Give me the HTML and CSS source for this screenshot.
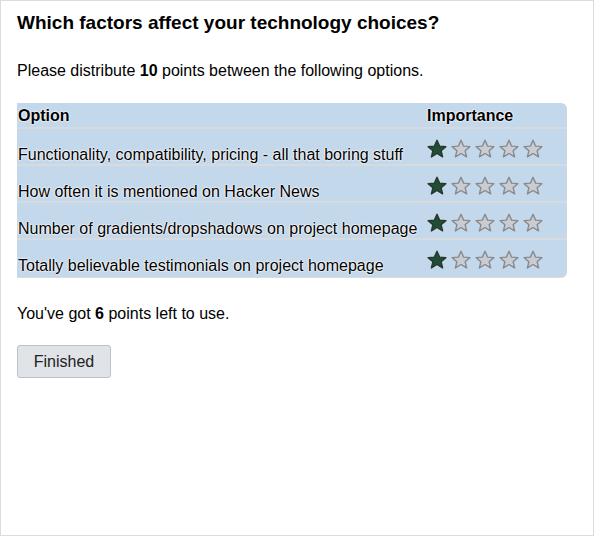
FILE: index.html
```html
<!DOCTYPE html>
<html>
<head>
<meta charset="utf-8">
<link rel="stylesheet" href="styles.css">
</head>
<body>
<div class="page">
  <h1 class="title">Which factors affect your technology choices?</h1>
  <p class="intro">Please distribute <b>10</b> points between the following options.</p>
  <div class="table">
    <div class="row head">
      <div class="cell opt">Option</div>
      <div class="cell imp">Importance</div>
    </div>
    <div class="row">
      <div class="cell opt">Functionality, compatibility, pricing - all that boring stuff</div>
      <div class="cell stars"><svg class="star on" viewBox="0 0 20 20"><path d="M10 1.3L12.6 7.1L18.9 7.6L14.1 11.7L15.6 17.9L10 14.5L4.4 17.9L5.9 11.7L1.1 7.6L7.4 7.1Z"/></svg><svg class="star" viewBox="0 0 20 20"><path d="M10 1.3L12.6 7.1L18.9 7.6L14.1 11.7L15.6 17.9L10 14.5L4.4 17.9L5.9 11.7L1.1 7.6L7.4 7.1Z"/></svg><svg class="star" viewBox="0 0 20 20"><path d="M10 1.3L12.6 7.1L18.9 7.6L14.1 11.7L15.6 17.9L10 14.5L4.4 17.9L5.9 11.7L1.1 7.6L7.4 7.1Z"/></svg><svg class="star" viewBox="0 0 20 20"><path d="M10 1.3L12.6 7.1L18.9 7.6L14.1 11.7L15.6 17.9L10 14.5L4.4 17.9L5.9 11.7L1.1 7.6L7.4 7.1Z"/></svg><svg class="star" viewBox="0 0 20 20"><path d="M10 1.3L12.6 7.1L18.9 7.6L14.1 11.7L15.6 17.9L10 14.5L4.4 17.9L5.9 11.7L1.1 7.6L7.4 7.1Z"/></svg></div>
    </div>
    <div class="row">
      <div class="cell opt">How often it is mentioned on Hacker News</div>
      <div class="cell stars"><svg class="star on" viewBox="0 0 20 20"><path d="M10 1.3L12.6 7.1L18.9 7.6L14.1 11.7L15.6 17.9L10 14.5L4.4 17.9L5.9 11.7L1.1 7.6L7.4 7.1Z"/></svg><svg class="star" viewBox="0 0 20 20"><path d="M10 1.3L12.6 7.1L18.9 7.6L14.1 11.7L15.6 17.9L10 14.5L4.4 17.9L5.9 11.7L1.1 7.6L7.4 7.1Z"/></svg><svg class="star" viewBox="0 0 20 20"><path d="M10 1.3L12.6 7.1L18.9 7.6L14.1 11.7L15.6 17.9L10 14.5L4.4 17.9L5.9 11.7L1.1 7.6L7.4 7.1Z"/></svg><svg class="star" viewBox="0 0 20 20"><path d="M10 1.3L12.6 7.1L18.9 7.6L14.1 11.7L15.6 17.9L10 14.5L4.4 17.9L5.9 11.7L1.1 7.6L7.4 7.1Z"/></svg><svg class="star" viewBox="0 0 20 20"><path d="M10 1.3L12.6 7.1L18.9 7.6L14.1 11.7L15.6 17.9L10 14.5L4.4 17.9L5.9 11.7L1.1 7.6L7.4 7.1Z"/></svg></div>
    </div>
    <div class="row">
      <div class="cell opt">Number of gradients/dropshadows on project homepage</div>
      <div class="cell stars"><svg class="star on" viewBox="0 0 20 20"><path d="M10 1.3L12.6 7.1L18.9 7.6L14.1 11.7L15.6 17.9L10 14.5L4.4 17.9L5.9 11.7L1.1 7.6L7.4 7.1Z"/></svg><svg class="star" viewBox="0 0 20 20"><path d="M10 1.3L12.6 7.1L18.9 7.6L14.1 11.7L15.6 17.9L10 14.5L4.4 17.9L5.9 11.7L1.1 7.6L7.4 7.1Z"/></svg><svg class="star" viewBox="0 0 20 20"><path d="M10 1.3L12.6 7.1L18.9 7.6L14.1 11.7L15.6 17.9L10 14.5L4.4 17.9L5.9 11.7L1.1 7.6L7.4 7.1Z"/></svg><svg class="star" viewBox="0 0 20 20"><path d="M10 1.3L12.6 7.1L18.9 7.6L14.1 11.7L15.6 17.9L10 14.5L4.4 17.9L5.9 11.7L1.1 7.6L7.4 7.1Z"/></svg><svg class="star" viewBox="0 0 20 20"><path d="M10 1.3L12.6 7.1L18.9 7.6L14.1 11.7L15.6 17.9L10 14.5L4.4 17.9L5.9 11.7L1.1 7.6L7.4 7.1Z"/></svg></div>
    </div>
    <div class="row">
      <div class="cell opt">Totally believable testimonials on project homepage</div>
      <div class="cell stars"><svg class="star on" viewBox="0 0 20 20"><path d="M10 1.3L12.6 7.1L18.9 7.6L14.1 11.7L15.6 17.9L10 14.5L4.4 17.9L5.9 11.7L1.1 7.6L7.4 7.1Z"/></svg><svg class="star" viewBox="0 0 20 20"><path d="M10 1.3L12.6 7.1L18.9 7.6L14.1 11.7L15.6 17.9L10 14.5L4.4 17.9L5.9 11.7L1.1 7.6L7.4 7.1Z"/></svg><svg class="star" viewBox="0 0 20 20"><path d="M10 1.3L12.6 7.1L18.9 7.6L14.1 11.7L15.6 17.9L10 14.5L4.4 17.9L5.9 11.7L1.1 7.6L7.4 7.1Z"/></svg><svg class="star" viewBox="0 0 20 20"><path d="M10 1.3L12.6 7.1L18.9 7.6L14.1 11.7L15.6 17.9L10 14.5L4.4 17.9L5.9 11.7L1.1 7.6L7.4 7.1Z"/></svg><svg class="star" viewBox="0 0 20 20"><path d="M10 1.3L12.6 7.1L18.9 7.6L14.1 11.7L15.6 17.9L10 14.5L4.4 17.9L5.9 11.7L1.1 7.6L7.4 7.1Z"/></svg></div>
    </div>
  </div>
  <p class="left">You've got <b>6</b> points left to use.</p>
  <button class="btn">Finished</button>
</div>
</body>
</html>
```

FILE: styles.css
```css
html, body {
  margin: 0;
  padding: 0;
  background: #fff;
}
body {
  font-family: "Liberation Sans", Arial, sans-serif;
  color: #000;
}
.page {
  box-sizing: border-box;
  width: 594px;
  height: 536px;
  border: 1px solid #dcdcdc;
  padding: 11px 16px 0 16px;
}
.title {
  margin: 0;
  font-size: 19px;
  line-height: 22px;
  font-weight: bold;
}
.intro {
  margin: 28px 0 0 0;
  font-size: 16px;
  line-height: 18px;
}
.table {
  margin-top: 23px;
  width: 550px;
  background: #c4d8eb;
  border-radius: 0 6px 6px 0;
  border-bottom: 1px solid #d9dcdf;
}
.row {
  display: grid;
  grid-template-columns: 410px 1fr;
  align-items: baseline;
  box-sizing: border-box;
  height: 37px;
  padding-top: 10px;
  border-bottom: 2px solid #d7dbe0;
  font-size: 16px;
  line-height: 18px;
}
.row:last-child {
  border-bottom: none;
}
.row.head {
  height: 26px;
  padding-top: 4px;
  font-weight: bold;
}
.cell {
  text-shadow: 0 0 2px #fff, 0 0 2px #fff, 0 0 1px #fff;
}
.opt {
  padding-left: 1px;
  white-space: nowrap;
}
.stars {
  white-space: nowrap;
  font-size: 0;
}
.stars .star {
  font-size: 16px;
}
.star {
  width: 20px;
  height: 20px;
  display: inline-block;
  vertical-align: 1px;
  margin-right: 4px;
}
.star path {
  fill: #c9cdd3;
  stroke: #878a8f;
  stroke-width: 1.4;
  stroke-linejoin: round;
}
.star.on path {
  fill: #1e4f35;
  stroke: #2a3630;
}
.left {
  margin: 27px 0 0 0;
  font-size: 16px;
  line-height: 18px;
}
.btn {
  display: block;
  margin-top: 22px;
  width: 94px;
  height: 33px;
  font-family: "Liberation Sans", Arial, sans-serif;
  font-size: 16px;
  color: #222;
  background: #e0e3e7;
  border: 1px solid #bdc0c4;
  border-radius: 3px;
  padding: 0;
}
```
